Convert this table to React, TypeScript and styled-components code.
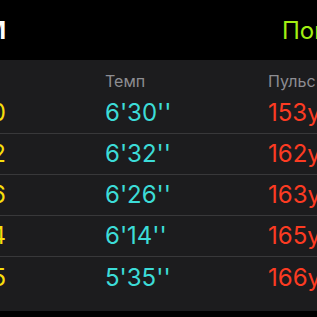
import React from "react";
import styled, { createGlobalStyle } from "styled-components";

const GlobalStyle = createGlobalStyle`
  html, body {
    margin: 0;
    padding: 0;
    background: #000;
    overflow: hidden;
  }
  body {
    font-family: Inter, "Noto Sans", "Liberation Sans", sans-serif;
    -webkit-font-smoothing: antialiased;
  }
`;

const Screen = styled.div`
  width: 317px;
  height: 317px;
  background: #000;
  overflow: hidden;
`;

const TopBar = styled.div`
  height: 60px;
  display: grid;
  grid-template-columns: 6px 1fr;
  align-items: center;
  column-gap: 276px;
  white-space: nowrap;
`;

const Title = styled.div`
  display: flex;
  justify-content: flex-end;
  font-size: 24px;
  font-weight: 700;
  color: #fff;
  line-height: 28px;
  padding-top: 2px;
`;

const Action = styled.div`
  font-size: 24px;
  font-weight: 400;
  color: #a2ef12;
  line-height: 28px;
  padding-top: 2px;
`;

const Panel = styled.div`
  background: #1c1c1e;
  padding-bottom: 13px;
`;

const Row = styled.div<{ $head?: boolean; $last?: boolean }>`
  display: grid;
  grid-template-columns: 6px 64px 1fr;
  column-gap: 99px;
  white-space: nowrap;
  box-sizing: border-box;
  height: ${({ $head }) => ($head ? "33px" : "41px")};
  padding-top: ${({ $head }) => ($head ? "11px" : "0")};
  align-items: ${({ $head }) => ($head ? "start" : "center")};
  border-bottom: ${({ $head, $last }) =>
    $head || $last ? "none" : "1px solid #38383a"};
`;

const Cell = styled.div<{ $color: string; $head?: boolean }>`
  display: flex;
  font-size: ${({ $head }) => ($head ? "16px" : "24px")};
  line-height: ${({ $head }) => ($head ? "20px" : "28px")};
  color: ${({ $color }) => $color};
`;

const Lead = styled(Cell)`
  justify-content: flex-end;
`;

const GRAY = "#8d8d92";
const YELLOW = "#f7de0c";
const CYAN = "#3cdcd8";
const RED = "#fc3b22";

const splits = [
  { dist: "1,00", pace: "6'30''", pulse: "153уд/мин" },
  { dist: "2,02", pace: "6'32''", pulse: "162уд/мин" },
  { dist: "3,06", pace: "6'26''", pulse: "163уд/мин" },
  { dist: "4,04", pace: "6'14''", pulse: "165уд/мин" },
  { dist: "5,05", pace: "5'35''", pulse: "166уд/мин" },
];

export default function App() {
  return (
    <Screen>
      <GlobalStyle />
      <TopBar>
        <Title>Отрезки по 1 КМ</Title>
        <Action>Показать</Action>
      </TopBar>
      <Panel>
        <Row $head>
          <Lead $head $color={GRAY} />
          <Cell $head $color={GRAY}>Темп</Cell>
          <Cell $head $color={GRAY}>Пульс</Cell>
        </Row>
        {splits.map((s, i) => (
          <Row key={s.dist} $last={i === splits.length - 1}>
            <Lead $color={YELLOW}>{s.dist}</Lead>
            <Cell $color={CYAN}>{s.pace}</Cell>
            <Cell $color={RED}>{s.pulse}</Cell>
          </Row>
        ))}
      </Panel>
    </Screen>
  );
}
